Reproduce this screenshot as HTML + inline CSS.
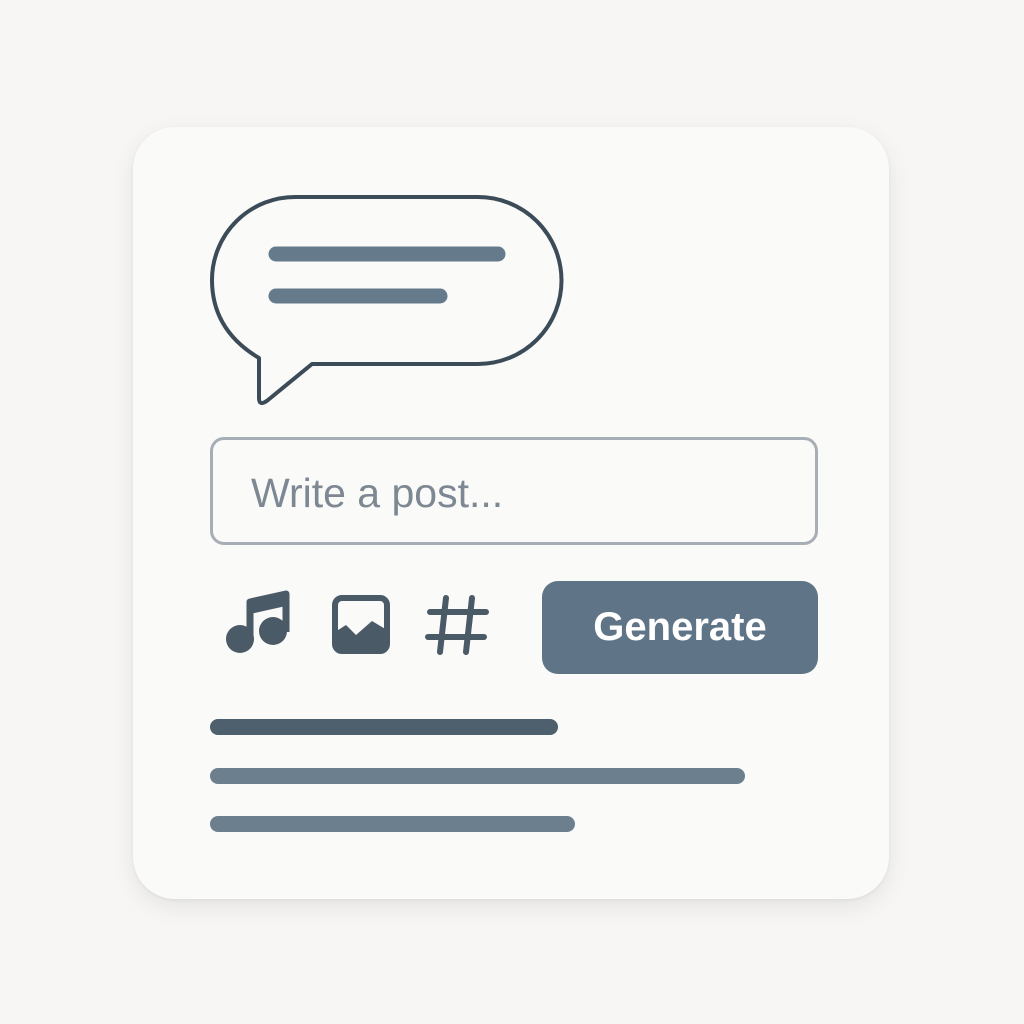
<!DOCTYPE html><html><head><style>
body{margin:0;width:1024px;height:1024px;background:#f7f6f4;position:relative;overflow:hidden;font-family:"Liberation Sans",sans-serif}
.card{position:absolute;left:133px;top:127px;width:756px;height:772px;border-radius:42px;background:#fafaf9;box-shadow:0 8px 24px rgba(0,0,0,.08),0 1px 3px rgba(0,0,0,.06)}
.bar{position:absolute;height:16px;border-radius:8px;background:#6b7f8f}
.input{position:absolute;left:210px;top:437px;width:608px;height:108px;border:3px solid #a7aeb5;border-radius:14px;box-sizing:border-box;}
.input span{position:absolute;left:38px;top:30px;font-size:41px;color:#7d8892}
.btn{position:absolute;left:542px;top:581px;width:276px;height:93px;border-radius:16px;background:#5f7587;color:#fff;font-size:40px;font-weight:bold;text-align:center;line-height:93px;}
</style></head><body>
<div class="card"></div>
<svg style="position:absolute;left:0;top:0" width="1024" height="1024">
<path d="M296 197 H478 A83 83 0 0 1 478 364 H312 L268 400 Q259 407 259 398 V358 Q212 330 212 280 A83 83 0 0 1 296 197 Z" fill="none" stroke="#3b4b57" stroke-width="4" stroke-linejoin="round"/>
<line x1="276" y1="254" x2="498" y2="254" stroke="#657a8a" stroke-width="15" stroke-linecap="round"/>
<line x1="276" y1="296" x2="440" y2="296" stroke="#657a8a" stroke-width="15" stroke-linecap="round"/>
<g fill="#4a5a67" stroke="#4a5a67">
<circle cx="240" cy="639" r="14" stroke="none"/><circle cx="273" cy="631" r="14" stroke="none"/>
<path d="M250 640 V602 L286 594 V632" fill="none" stroke-width="7" stroke-linejoin="round"/>
<path d="M250 602 L286 594 V606 L250 614Z" stroke="none"/>
<rect x="335" y="598" width="52" height="53" rx="7" fill="none" stroke-width="6"/>
<path d="M335 632 L346 625 L356 635 L372 621 L387 630 V651 H335Z" stroke="none"/>
<path d="M446 598 L440 652 M472 598 L466 652 M430 612 H486 M428 637 H484" fill="none" stroke-width="6" stroke-linecap="round"/>
</g>
</svg>
<div class="input"><span>Write a post...</span></div>
<div class="btn">Generate</div>
<div class="bar" style="left:210px;top:719px;width:348px;background:#4e606d"></div>
<div class="bar" style="left:210px;top:768px;width:535px"></div>
<div class="bar" style="left:210px;top:816px;width:365px"></div>
</body></html>
